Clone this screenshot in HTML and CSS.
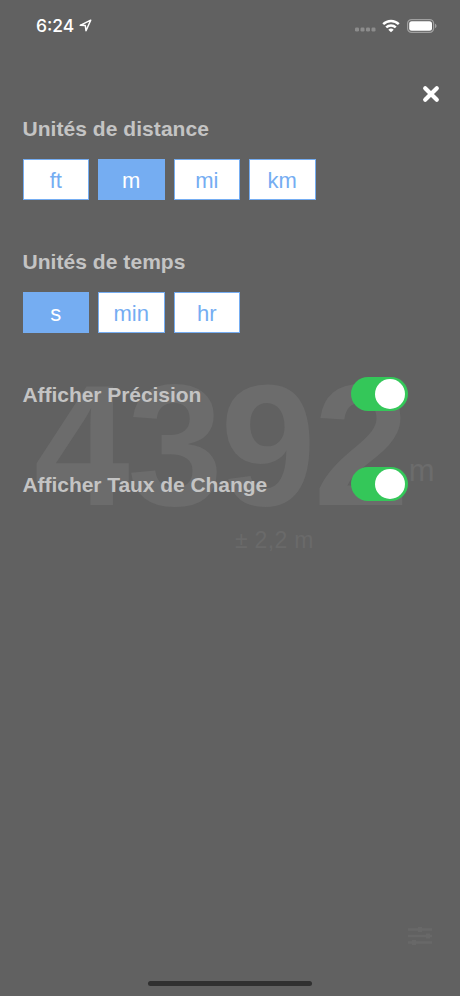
FILE: index.html
```
<!DOCTYPE html>
<html lang="fr">
<head>
    <meta charset="UTF-8">
    <meta name="viewport" content="width=device-width, initial-scale=1.0">
    <title>Altitude</title>
    <link rel="stylesheet" href="styles.css">
</head>
<body>
    <div class="screen">
        <div class="readout">
            <div class="altitude">
                <span class="value">4392</span>
                <span class="unit">m</span>
            </div>
            <div class="accuracy">± 2,2 m</div>
            <svg class="settings-icon" width="24" height="20" viewBox="0 0 24 20">
                <path d="M0 3.500h24M0 10h24M0 16.500h24" stroke="currentColor" stroke-width="2.500"/>
                <path d="M12 1v5M20 7.500v5M6 14v5" stroke="currentColor" stroke-width="4"/>
            </svg>
        </div>

        <div class="overlay">
            <div class="status-bar">
                <span class="time">6:24</span>
                <svg class="location" width="13" height="13" viewBox="0 0 13 13">
                    <path d="M1.200 6.300L11.700 1.200L7 11.700L6.300 6.600Z" fill="none" stroke="#fff" stroke-width="1.500" stroke-linejoin="round"/>
                </svg>
                <svg class="signal" width="21" height="5" viewBox="0 0 21 5" fill="#8c8c8c">
                    <rect x="0" y="0.500" width="4" height="4" rx="1.300"/>
                    <rect x="5.500" y="0.500" width="4" height="4" rx="1.300"/>
                    <rect x="11" y="0.500" width="4" height="4" rx="1.300"/>
                    <rect x="16.500" y="0.500" width="4" height="4" rx="1.300"/>
                </svg>
                <svg class="wifi" width="18" height="14" viewBox="0 0 18 14">
                    <path d="M1.200 5.100a11.200 11.200 0 0 1 15.600 0M4.200 8.300a7 7 0 0 1 9.600 0" fill="none" stroke="#fff" stroke-width="2.500"/>
                    <path d="M9 13.300L6.300 10.700a3.900 3.900 0 0 1 5.400 0Z" fill="#fff"/>
                </svg>
                <svg class="battery" width="30" height="14" viewBox="0 0 30 14">
                    <rect x="0.600" y="0.600" width="26" height="12.800" rx="4" fill="none" stroke="#a0a0a0" stroke-width="1.200"/>
                    <rect x="2.200" y="2.200" width="22.800" height="9.600" rx="2.500" fill="#fff"/>
                    <path d="M28 4.800c2 .7 2 3.700 0 4.400Z" fill="#a0a0a0"/>
                </svg>
            </div>

            <div class="close-row">
                <button class="close" aria-label="Fermer">
                    <svg width="18" height="18" viewBox="0 0 18 18">
                        <path d="M3.200 3.200L14.800 14.800M14.800 3.200L3.200 14.800" stroke="#fff" stroke-width="4.200" stroke-linecap="round"/>
                    </svg>
                </button>
            </div>

            <div class="settings">
                <h2>Unités de distance</h2>
                <div class="units">
                    <button class="unit-button">ft</button>
                    <button class="unit-button selected">m</button>
                    <button class="unit-button">mi</button>
                    <button class="unit-button">km</button>
                </div>

                <h2>Unités de temps</h2>
                <div class="units">
                    <button class="unit-button selected">s</button>
                    <button class="unit-button">min</button>
                    <button class="unit-button">hr</button>
                </div>

                <div class="switch-row">
                    <h2>Afficher Précision</h2>
                    <div class="switch"><div class="knob"></div></div>
                </div>
                <div class="switch-row">
                    <h2>Afficher Taux de Change</h2>
                    <div class="switch"><div class="knob"></div></div>
                </div>
            </div>

            <div class="home-indicator"></div>
        </div>
    </div>
</body>
</html>
```

FILE: styles.css
```
* {
    box-sizing: border-box;
}
body {
    margin: 0;
    background-color: #616161;
    font-family: "Liberation Sans", Arial, sans-serif;
}
/* readout and overlay share one cell, overlay on top */
.screen {
    display: grid;
    width: 460px;
    height: 996px;
    overflow: hidden;
}
.readout, .overlay {
    grid-area: 1 / 1;
    display: flex;
    flex-direction: column;
    min-width: 0;
}
.readout {
    padding: 367px 28px 50px 34px;
    color: #6c6c6c;
}
.altitude {
    display: flex;
    align-items: baseline;
    height: 156px;
    white-space: nowrap;
}
.value {
    font-size: 172px;
    font-weight: bold;
    line-height: 156px;
    letter-spacing: -2.5px;
}
.unit {
    margin-left: 2px;
    font-size: 31px;
    position: relative;
    top: -24px;
}
.accuracy {
    margin: 3px 0 0 201px;
    color: #6a6a6a;
    font-size: 23px;
    line-height: 28px;
    letter-spacing: 0.3px;
}
.settings-icon {
    margin-top: auto;
    align-self: flex-end;
    color: #686868;
}
.overlay {
    z-index: 1;
}
.status-bar {
    display: flex;
    align-items: center;
    height: 51px;
    padding-left: 36px;
    padding-right: 23px;
    color: #fff;
}
.time {
    font-family: Inter, sans-serif;
    font-size: 17.5px;
    font-weight: 500;
}
.location {
    margin-left: 5px;
}
.signal {
    margin: 8px 6px 0 auto;
}
.wifi {
    margin-right: 7px;
}
.close-row {
    display: flex;
    justify-content: flex-end;
    height: 63px;
    padding: 34px 20px 0 0;
}
.close {
    width: 18px;
    height: 18px;
    padding: 0;
    border: none;
    background: none;
}
.close svg {
    display: block;
}
.settings {
    padding: 0 52px 0 22.5px;
}
h2 {
    margin: 0;
    color: #c4c4c4;
    font-size: 21px;
    font-weight: bold;
    line-height: 30px;
    letter-spacing: 0.05px;
}
.units {
    display: flex;
    gap: 9px;
    margin: 15px 0 47px;
}
.unit-button {
    width: 66.5px;
    height: 41px;
    padding: 2px 0 0;
    border: 1px solid #75adf2;
    background-color: #fff;
    color: #75adf2;
    font-family: inherit;
    font-size: 22px;
}
.unit-button.selected {
    background-color: #75adf2;
    color: #fff;
}
.units + .switch-row {
    margin-top: -3px;
}
.switch-row {
    display: flex;
    align-items: center;
    justify-content: space-between;
    height: 34px;
    margin-bottom: 56px;
}
.switch-row h2 {
    padding-top: 2px;
    letter-spacing: -0.05px;
}
.switch {
    width: 57px;
    height: 34px;
    padding: 2px 3px 2px 24px;
    border-radius: 17px;
    background-color: #34c759;
}
.knob {
    width: 30px;
    height: 30px;
    border-radius: 50%;
    background-color: #fff;
}
.home-indicator {
    width: 164px;
    height: 5px;
    margin: auto auto 10px;
    border-radius: 3px;
    background-color: #303030;
}
```
